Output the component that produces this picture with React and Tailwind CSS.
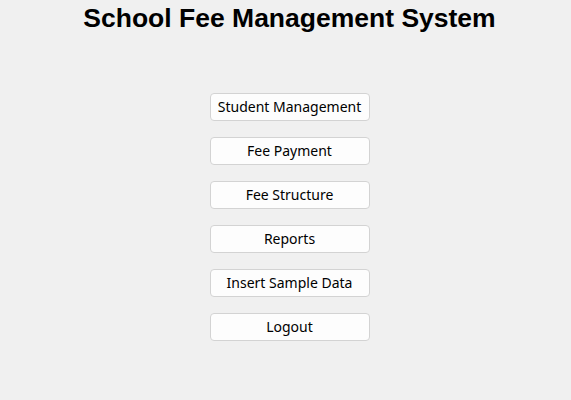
export default function App() {
  const items = [
    'Student Management',
    'Fee Payment',
    'Fee Structure',
    'Reports',
    'Insert Sample Data',
    'Logout',
  ]

  return (
    <div className="w-[571px] h-[400px] bg-[#f0f0f0] pl-2 flex flex-col items-center">
      <h1 className="mt-[3px] text-[26.5px] leading-[30px] font-bold text-black font-['Liberation_Sans',Arial,sans-serif]">
        School Fee Management System
      </h1>
      <div className="mt-[60px] flex flex-col gap-4">
        {items.map((label) => (
          <button
            key={label}
            className="w-[160px] h-[28px] pb-px rounded-[4px] border border-[#d3d3d3] bg-[#fdfdfd] text-[14px] text-black font-['Noto_Sans',sans-serif]"
          >
            {label}
          </button>
        ))}
      </div>
    </div>
  )
}
